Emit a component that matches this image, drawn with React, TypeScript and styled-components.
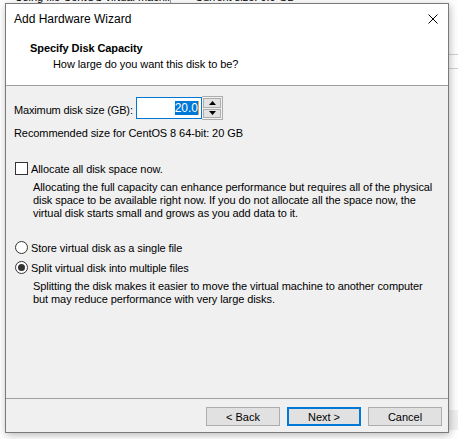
import React from 'react';
import styled, { createGlobalStyle } from 'styled-components';

const GlobalStyle = createGlobalStyle`
    html, body {
        margin: 0;
        padding: 0;
        background: #ffffff;
    }
    body {
        font-family: 'Liberation Sans', Arial, sans-serif;
        font-size: 11px;
        color: #000000;
    }
`;

const Desktop = styled.div`
    position: relative;
    width: 458px;
    height: 439px;
    overflow: hidden;
    background: #ffffff;
`;

// the window behind the wizard, mostly hidden
const BackWindow = styled.div`
    display: grid;
    grid-template-columns: 171px 1fr;
    height: 100%;
    margin-top: -9px;
`;

const BackColumn = styled.div<{ $divider?: boolean }>`
    display: flex;
    flex-direction: column;
    overflow: hidden;
    border-right: ${(p) => (p.$divider ? '1px solid #a0a0a0' : 'none')};
    padding-left: ${(p) => (p.$divider ? '15px' : '24px')};
`;

const BackText = styled.div`
    height: 12px;
    line-height: 12px;
    font-size: 11px;
    white-space: nowrap;
`;

const BackRule = styled.div<{ $top: number }>`
    margin-top: ${(p) => p.$top}px;
    margin-left: -24px;
    height: 1px;
    background: #d0d0d0;
`;

const BackFooter = styled.div`
    margin-top: auto;
    height: 20px;
    background: #f0f0f0;
`;

const Dialog = styled.div`
    position: absolute;
    left: 5px;
    top: 3px;
    width: 442px;
    height: 428px;
    border: 1px solid #7a7a7a;
    background: #f0f0f0;
    display: flex;
    flex-direction: column;
    box-shadow: 1px 2px 8px rgba(0, 0, 0, 0.28);
`;

const TitleBar = styled.div`
    height: 30px;
    background: #ffffff;
    display: flex;
    align-items: center;
    justify-content: space-between;
    padding: 0 10px 0 8px;
`;

const TitleText = styled.span`
    font-size: 12px;
    color: #000000;
`;

const CloseIcon = styled.svg`
    width: 10px;
    height: 10px;
`;

const Header = styled.div`
    height: 52px;
    background: #ffffff;
    border-bottom: 1px solid #a0a0a0;
    padding: 8px 0 0 24px;
    box-sizing: border-box;
    letter-spacing: -0.08px;
`;

const HeaderTitle = styled.div`
    font-weight: bold;
    line-height: 13px;
`;

const HeaderSub = styled.div`
    margin: 3px 0 0 23px;
    line-height: 13px;
`;

const Body = styled.div`
    flex: 1;
    padding: 10px 8px 0 8px;
    display: flex;
    flex-direction: column;
    letter-spacing: -0.08px;
`;

const SizeRow = styled.div`
    display: flex;
    align-items: center;
`;

const SizeLabel = styled.span`
    flex: 0 0 122px;
    white-space: nowrap;
    padding-top: 3px;
    letter-spacing: -0.15px;
`;

const NumberBox = styled.div`
    width: 62px;
    height: 20px;
    border: 1px solid #0078d7;
    background: #ffffff;
    display: flex;
    align-items: center;
    justify-content: flex-end;
    padding-right: 2px;
`;

const Selected = styled.span`
    background: #0078d7;
    color: #ffffff;
    font-size: 12px;
    line-height: 14px;
    letter-spacing: 0;
    border-right: 1px solid #e8a040;
`;

const Spinner = styled.div`
    width: 18px;
    height: 20px;
    border: 1px solid #adadad;
    border-left: none;
    display: flex;
    flex-direction: column;
    gap: 1px;
    padding: 1px;
    box-sizing: content-box;
    background: #f0f0f0;
`;

const SpinButton = styled.div`
    flex: 1;
    background: #e1e1e1;
    border: 1px solid #adadad;
    display: flex;
    align-items: center;
    justify-content: center;
`;

const Line = styled.div<{ $top?: number; $indent?: number }>`
    margin-top: ${(p) => p.$top ?? 0}px;
    padding-left: ${(p) => p.$indent ?? 0}px;
    line-height: 13px;
`;

const OptionRow = styled.label<{ $top: number }>`
    display: flex;
    align-items: center;
    gap: 3px;
    margin-top: ${(p) => p.$top}px;
    padding-left: 1px;
    height: 13px;
`;

const CheckBox = styled.span`
    width: 11px;
    height: 11px;
    border: 1px solid #333333;
    background: #ffffff;
`;

const Radio = styled.span<{ $checked?: boolean }>`
    width: 11px;
    height: 11px;
    border: 1px solid #333333;
    border-radius: 50%;
    background: #ffffff;
    display: flex;
    align-items: center;
    justify-content: center;

    &::after {
        content: '';
        width: 7px;
        height: 7px;
        border-radius: 50%;
        background: ${(p) => (p.$checked ? '#333333' : 'transparent')};
    }
`;

const Footer = styled.div`
    border-top: 1px solid #a0a0a0;
    display: flex;
    justify-content: flex-end;
    gap: 7px;
    padding: 8px 6px 0 0;
    height: 34px;
    box-sizing: border-box;
`;

const Button = styled.button<{ $default?: boolean }>`
    width: 74px;
    height: 19px;
    box-sizing: border-box;
    background: #e1e1e1;
    border: ${(p) => (p.$default ? '2px solid #0078d7' : '1px solid #adadad')};
    font-family: 'Liberation Sans', Arial, sans-serif;
    font-size: 11px;
    color: #000000;
    padding: 0;
`;

const Arrow = ({ up }: { up?: boolean }) => (
    <svg width="7" height="4" viewBox="0 0 7 4">
        <path d={up ? 'M0 4 L3.5 0 L7 4 Z' : 'M0 0 L3.5 4 L7 0 Z'} fill="#000" />
    </svg>
);

export default function App() {
    return (
        <Desktop>
            <GlobalStyle />
            <BackWindow>
                <BackColumn $divider>
                    <BackText>Using file CentOS virtual machine</BackText>
                    <BackFooter />
                </BackColumn>
                <BackColumn>
                    <BackText>Current size: 9.0 GB</BackText>
                    <BackRule $top={51} />
                    <BackRule $top={13} />
                    <BackFooter />
                </BackColumn>
            </BackWindow>

            <Dialog>
                <TitleBar>
                    <TitleText>Add Hardware Wizard</TitleText>
                    <CloseIcon viewBox="0 0 10 10">
                        <path d="M0.5 0.5 L9.5 9.5 M9.5 0.5 L0.5 9.5" stroke="#000" strokeWidth="1" />
                    </CloseIcon>
                </TitleBar>
                <Header>
                    <HeaderTitle>Specify Disk Capacity</HeaderTitle>
                    <HeaderSub>How large do you want this disk to be?</HeaderSub>
                </Header>
                <Body>
                    <SizeRow>
                        <SizeLabel>Maximum disk size (GB):</SizeLabel>
                        <NumberBox>
                            <Selected>20.0</Selected>
                        </NumberBox>
                        <Spinner>
                            <SpinButton>
                                <Arrow up />
                            </SpinButton>
                            <SpinButton>
                                <Arrow />
                            </SpinButton>
                        </Spinner>
                    </SizeRow>
                    <Line $top={7}>Recommended size for CentOS 8 64-bit: 20 GB</Line>

                    <OptionRow $top={22}>
                        <CheckBox />
                        Allocate all disk space now.
                    </OptionRow>
                    <Line $top={6} $indent={19}>
                        Allocating the full capacity can enhance performance but requires all of the physical
                        <br />
                        disk space to be available right now. If you do not allocate all the space now, the
                        <br />
                        virtual disk starts small and grows as you add data to it.
                    </Line>

                    <OptionRow $top={21}>
                        <Radio />
                        Store virtual disk as a single file
                    </OptionRow>
                    <OptionRow $top={7}>
                        <Radio $checked />
                        Split virtual disk into multiple files
                    </OptionRow>
                    <Line $top={6} $indent={19}>
                        Splitting the disk makes it easier to move the virtual machine to another computer
                        <br />
                        but may reduce performance with very large disks.
                    </Line>
                </Body>
                <Footer>
                    <Button>&lt; Back</Button>
                    <Button $default>Next &gt;</Button>
                    <Button>Cancel</Button>
                </Footer>
            </Dialog>
        </Desktop>
    );
}
